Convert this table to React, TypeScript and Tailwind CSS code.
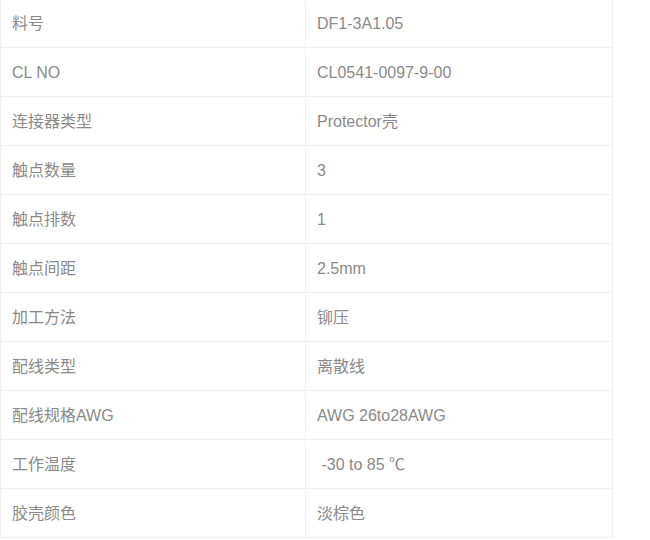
const rows: [string, string][] = [
  ["料号", "DF1-3A1.05"],
  ["CL NO", "CL0541-0097-9-00"],
  ["连接器类型", "Protector壳"],
  ["触点数量", "3"],
  ["触点排数", "1"],
  ["触点间距", "2.5mm"],
  ["加工方法", "铆压"],
  ["配线类型", "离散线"],
  ["配线规格AWG", "AWG 26to28AWG"],
  ["工作温度", "\u00a0-30 to 85 ℃"],
  ["胶壳颜色", "淡棕色"],
];

export default function App() {
  return (
    <div className="h-[540px] w-[650px] overflow-hidden bg-white">
      <div
        className="-mt-[2px] w-[613px] border-x border-b border-[#f0f0f0] text-[16px] text-[#8a8a8a]"
        style={{ fontFamily: '"Liberation Sans", "Noto Sans CJK SC", sans-serif' }}
      >
        {rows.map(([label, value]) => (
          <div key={label} className="flex h-[49px] border-t border-[#f0f0f0] pt-[2px]">
            <div className="flex w-[305px] items-center border-r border-[#f0f0f0] pl-[11px]">
              {label}
            </div>
            <div className="flex w-[305px] items-center pl-[11px]">{value}</div>
          </div>
        ))}
      </div>
    </div>
  );
}
